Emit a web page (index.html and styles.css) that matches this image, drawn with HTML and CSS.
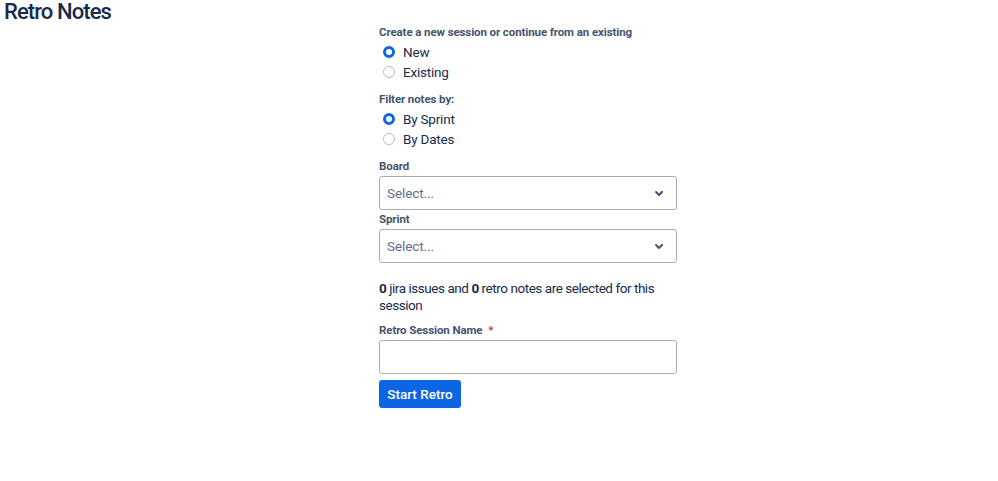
FILE: index.html
```html
<!DOCTYPE html>
<html>
<head>
<meta charset="utf-8">
<link rel="stylesheet" href="styles.css">
</head>
<body>
<h1 class="title">Retro Notes</h1>
<form class="form">
  <div class="group-label">Create a new session or continue from an existing</div>
  <label class="radio"><span class="dot checked"></span>New</label>
  <label class="radio"><span class="dot"></span>Existing</label>

  <div class="group-label gap">Filter notes by:</div>
  <label class="radio"><span class="dot checked"></span>By Sprint</label>
  <label class="radio"><span class="dot"></span>By Dates</label>

  <div class="group-label gap">Board</div>
  <div class="select"><span class="placeholder">Select...</span>
    <svg class="chev" width="24" height="24" viewBox="0 0 24 24"><path d="M8.3 10.3a1 1 0 0 1 1.4 0L12 12.6l2.3-2.3a1 1 0 1 1 1.4 1.4l-3 3a1 1 0 0 1-1.4 0l-3-3a1 1 0 0 1 0-1.4z" fill="#44546F"/></svg>
  </div>
  <div class="group-label tight">Sprint</div>
  <div class="select"><span class="placeholder">Select...</span>
    <svg class="chev" width="24" height="24" viewBox="0 0 24 24"><path d="M8.3 10.3a1 1 0 0 1 1.4 0L12 12.6l2.3-2.3a1 1 0 1 1 1.4 1.4l-3 3a1 1 0 0 1-1.4 0l-3-3a1 1 0 0 1 0-1.4z" fill="#44546F"/></svg>
  </div>

  <p class="summary"><b>0</b> jira issues and <b>0</b> retro notes are selected for this session</p>

  <div class="group-label">Retro Session Name <span class="req">*</span></div>
  <div class="input"></div>
  <button type="button" class="btn">Start Retro</button>
</form>
</body>
</html>
```
FILE: styles.css
```css
html, body {
  margin: 0;
  padding: 0;
  background: #fff;
  font-family: Roboto, Inter, "Liberation Sans", sans-serif;
  color: #172B4D;
}
.title {
  margin: 0;
  padding: 0 4px;
  font-size: 22px;
  line-height: 24px;
  font-weight: 500;
  letter-spacing: -0.9px;
  color: #172B4D;
}
.form {
  margin-left: 379px;
  width: 298px;
  display: flex;
  flex-direction: column;
}
.group-label {
  font-size: 11.5px;
  line-height: 16px;
  font-weight: 700;
  color: #44546F;
  letter-spacing: -0.1px;
}
.group-label.gap { margin-top: 9px; }
.group-label.tight { margin-top: 1px; }
.req { color: #C9372C; margin-left: 3px; }
.radio {
  display: flex;
  align-items: center;
  height: 20px;
  font-size: 13.5px;
  letter-spacing: -0.2px;
  color: #172B4D;
}
.group-label + .radio { margin-top: 2px; }
.dot {
  box-sizing: border-box;
  width: 12px;
  height: 12px;
  border-radius: 50%;
  border: 1px solid #B3B9C4;
  background: #fff;
  margin-left: 4px;
  margin-right: 8px;
}
.dot.checked {
  border: 3.5px solid #0C66E4;
  background: #fff;
}
.select {
  box-sizing: border-box;
  margin-top: 2px;
  height: 34px;
  border: 1px solid #A5ADBA;
  border-radius: 3px;
  display: flex;
  align-items: center;
  justify-content: space-between;
  padding: 0 5px 0 7px;
}
.placeholder {
  font-size: 13.5px;
  letter-spacing: -0.1px;
  color: #626F86;
}
.chev { display: block; }
.summary {
  margin: 17px 0 8px;
  font-size: 13.5px;
  line-height: 17px;
  letter-spacing: -0.45px;
  color: #172B4D;
}
.summary b { font-weight: 700; }
.input {
  box-sizing: border-box;
  margin-top: 2px;
  height: 34px;
  border: 1px solid #A5ADBA;
  border-radius: 3px;
}
.btn {
  align-self: flex-start;
  margin-top: 6px;
  height: 28px;
  width: 82px;
  padding: 0;
  border: none;
  border-radius: 3px;
  background: #0C66E4;
  color: #fff;
  font-family: inherit;
  font-size: 13.5px;
  font-weight: 500;
}
```
